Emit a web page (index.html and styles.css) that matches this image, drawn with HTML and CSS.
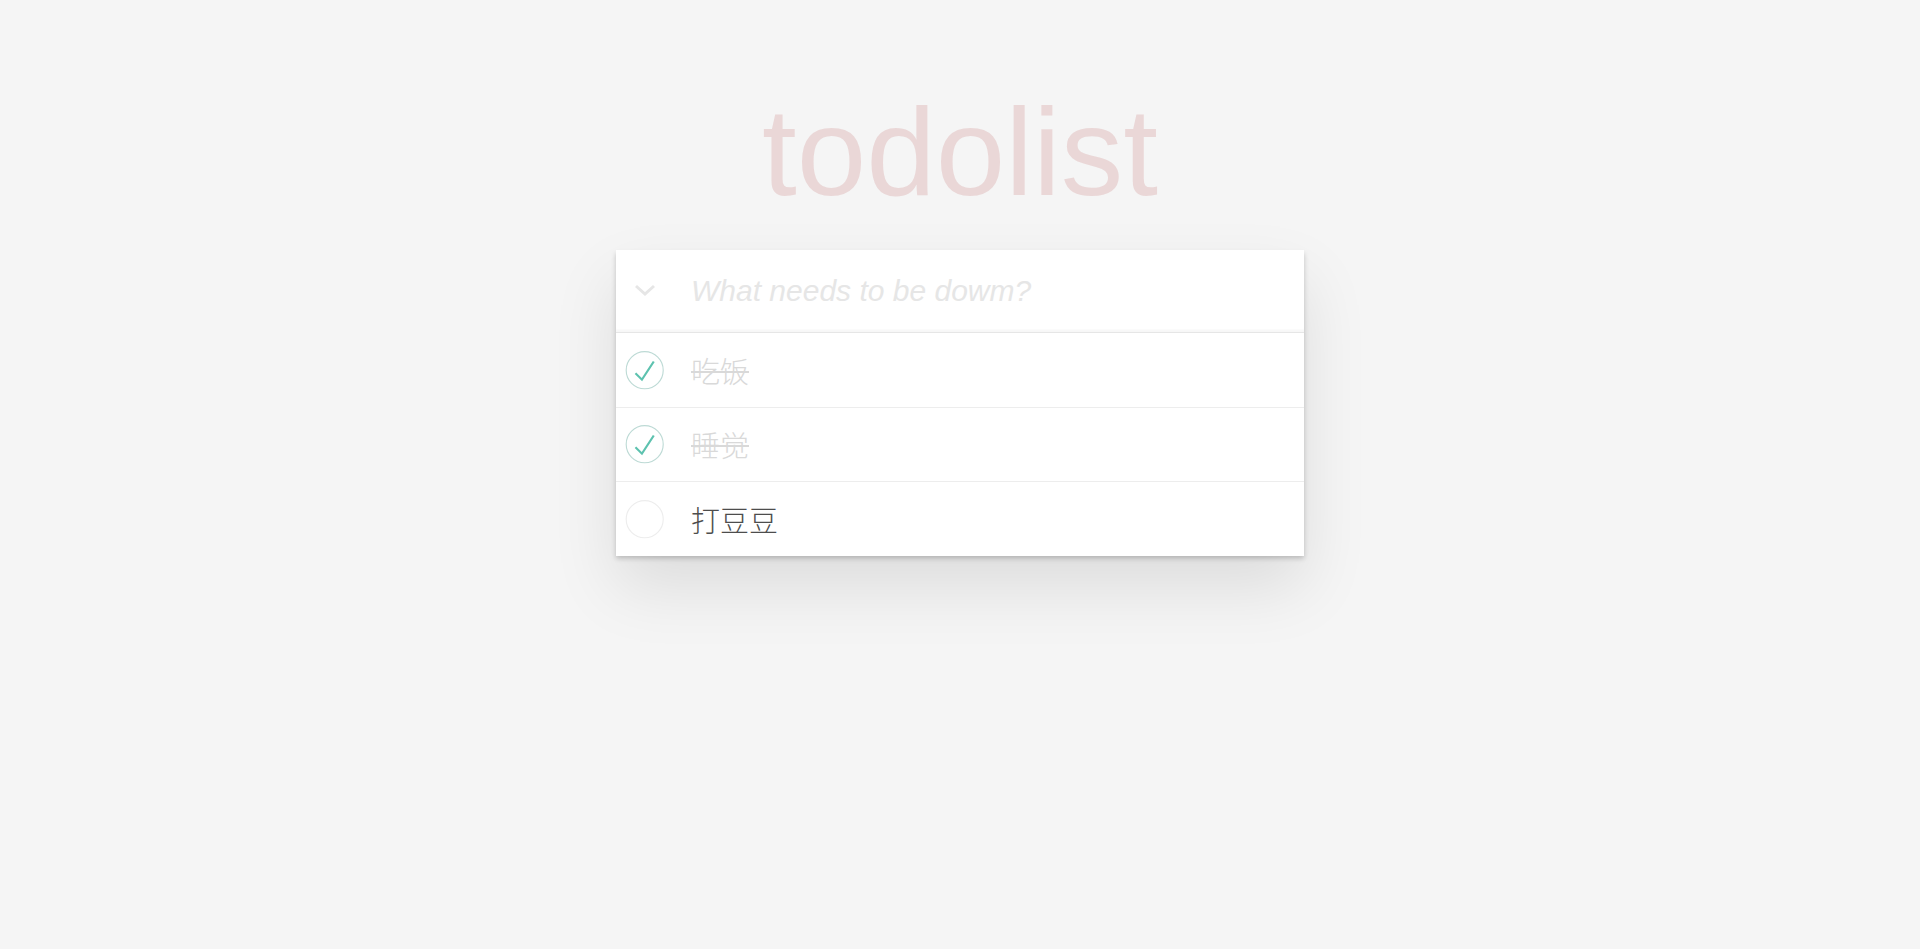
FILE: index.html
```html
<!DOCTYPE html>
<html lang="zh-CN">
<head>
<meta charset="utf-8">
<title>todolist</title>
<link rel="stylesheet" href="styles.css">
</head>
<body>
<div class="page">
  <h1 class="title">todolist</h1>
  <section class="todoapp">
    <header class="header">
      <span class="toggle-all">
        <svg width="22" height="12" viewBox="0 0 22 12"><polyline points="2,2 11,10 20,2" fill="none" stroke="#e6e6e6" stroke-width="3"/></svg>
      </span>
      <input class="new-todo" type="text" placeholder="What needs to be dowm?">
    </header>
    <ul class="todo-list">
      <li class="item done">
        <svg class="check" width="50" height="50" viewBox="-10 -18 100 135"><circle cx="50" cy="50" r="50" fill="none" stroke="#bddad5" stroke-width="3"/><path fill="#5dc2af" d="M72 25L42 71 27 56l-4 4 20 20 34-52z"/></svg>
        <label class="text">吃饭</label>
      </li>
      <li class="item done">
        <svg class="check" width="50" height="50" viewBox="-10 -18 100 135"><circle cx="50" cy="50" r="50" fill="none" stroke="#bddad5" stroke-width="3"/><path fill="#5dc2af" d="M72 25L42 71 27 56l-4 4 20 20 34-52z"/></svg>
        <label class="text">睡觉</label>
      </li>
      <li class="item">
        <svg class="check" width="50" height="50" viewBox="-10 -18 100 135"><circle cx="50" cy="50" r="50" fill="none" stroke="#ededed" stroke-width="3"/></svg>
        <label class="text">打豆豆</label>
      </li>
    </ul>
  </section>
</div>
</body>
</html>
```
FILE: styles.css
```css
html, body {
  margin: 0;
  padding: 0;
}
html {
  background: #f5f5f5;
}
body {
  min-height: 100vh;
  background: #f5f5f5;
  font-family: "Liberation Sans", Arial, "Noto Sans CJK SC", sans-serif;
  color: #4d4d4d;
}
.page {
  width: 688px;
  margin: 0 auto;
  padding-top: 77px;
  padding-bottom: 120px;
}
.title {
  margin: 0 0 23px;
  height: 150px;
  line-height: 150px;
  font-size: 125px;
  font-weight: normal;
  text-align: center;
  color: rgba(175, 47, 47, 0.15);
}
.todoapp {
  background: #fff;
  box-shadow: 0 2.5px 5px 0 rgba(0, 0, 0, 0.2), 0 31px 62px 0 rgba(0, 0, 0, 0.1);
}
.header {
  display: flex;
  align-items: center;
  height: 82px;
  box-shadow: inset 0 -2.5px 1px rgba(0, 0, 0, 0.03);
}
.toggle-all {
  display: flex;
  width: 22px;
  height: 12px;
  margin-left: 17.7px;
  margin-top: -2px;
}
.new-todo {
  flex: 1;
  min-width: 0;
  margin-left: 35.3px;
  padding: 0 20px 0 0;
  border: none;
  outline: none;
  background: transparent;
  height: 82px;
  font-family: "Liberation Sans", Arial, sans-serif;
  font-size: 30px;
  color: #4d4d4d;
}
.new-todo::placeholder {
  font-style: italic;
  color: #e6e6e6;
}
.todo-list {
  list-style: none;
  margin: 0;
  padding: 0;
  border-top: 1px solid #e6e6e6;
}
.item {
  display: flex;
  align-items: center;
  height: 73.5px;
  border-bottom: 1px solid #ededed;
}
.item:last-child {
  border-bottom: none;
}
.check {
  flex: none;
}
.text {
  margin-left: 25px;
  font-family: "Noto Sans CJK SC", sans-serif;
  font-weight: 300;
  font-size: 29px;
  line-height: 36px;
  color: #4d4d4d;
}
.done .text {
  color: #d9d9d9;
  text-decoration: line-through;
  text-decoration-thickness: 2px;
}
```
